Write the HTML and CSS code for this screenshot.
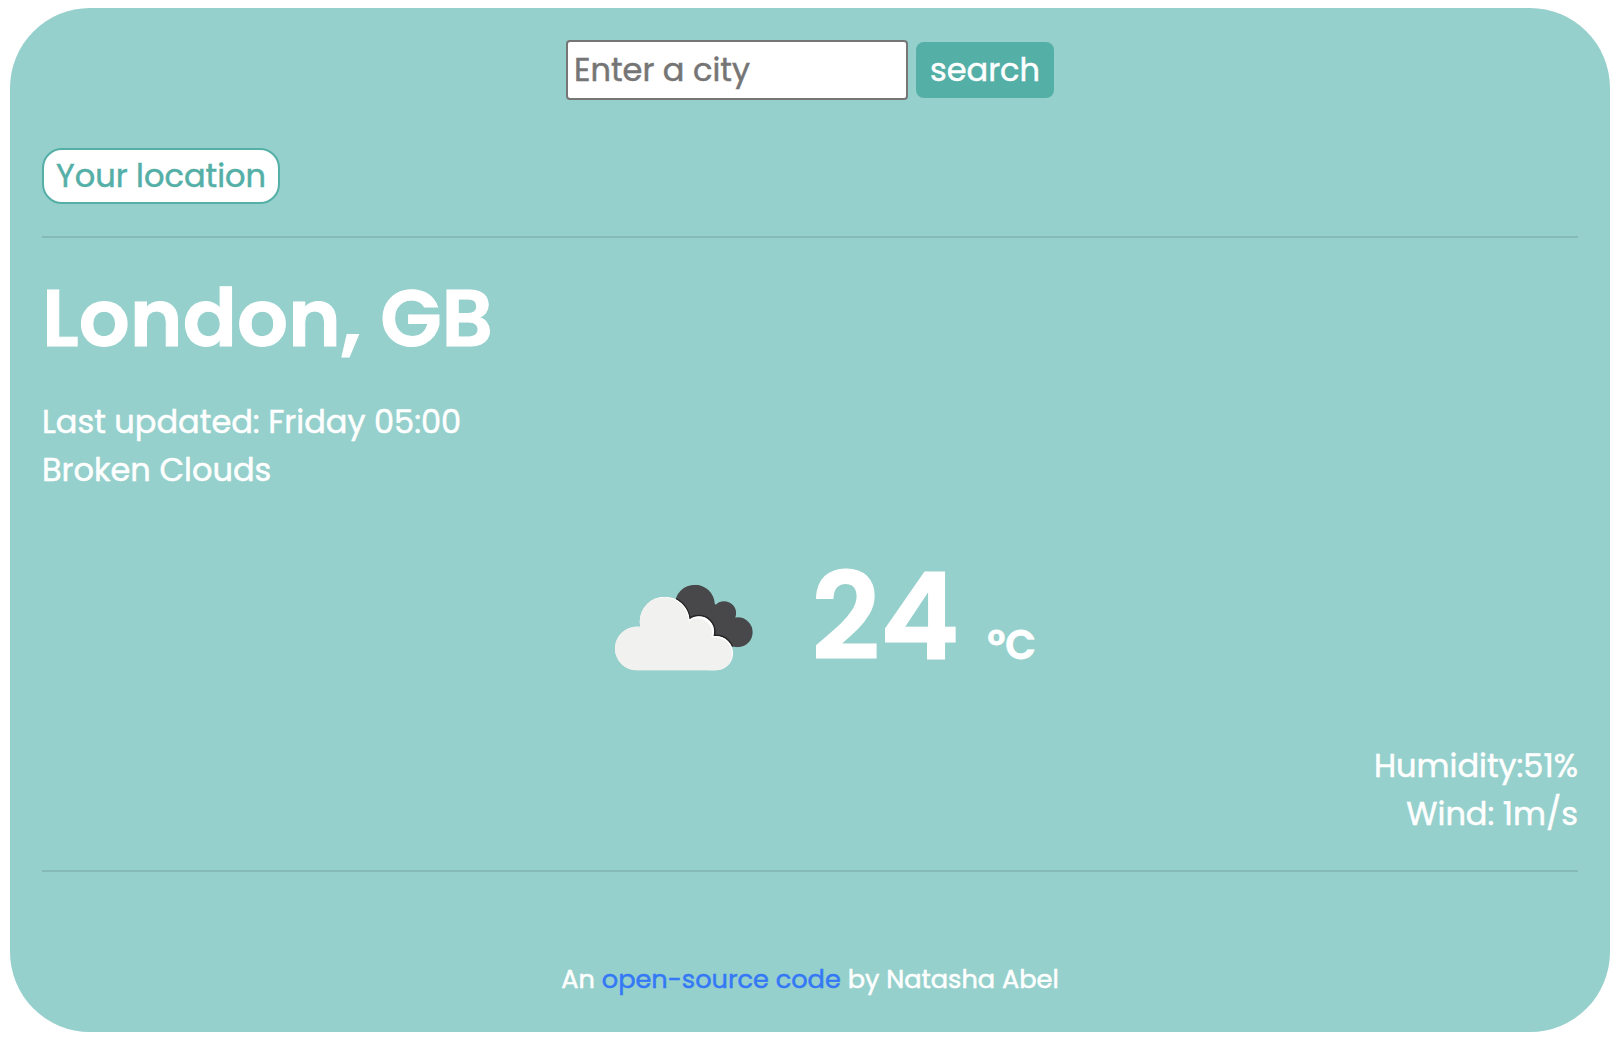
FILE: index.html
```html
<!DOCTYPE html>
<html lang="en">
<head>
<meta charset="utf-8">
<title>Weather</title>
<link rel="stylesheet" href="styles.css">
</head>
<body>
<main class="card">
  <form class="search">
    <input class="search-input" type="text" placeholder="Enter a city">
    <button class="search-button" type="button">search</button>
  </form>
  <button class="location" type="button">Your location</button>
  <hr class="rule">
  <h1 class="city">London, GB</h1>
  <ul class="details">
    <li class="updated">Last updated: Friday 05:00</li>
    <li class="sky">Broken Clouds</li>
  </ul>
  <section class="weather">
    <svg class="icon" viewBox="0 0 200 144" role="img" aria-label="Broken clouds">
      <defs>
        <clipPath id="dark">
          <circle cx="111.3" cy="62" r="20"/><circle cx="140.7" cy="70.7" r="12"/><circle cx="154.3" cy="89.7" r="15"/>
          <path d="M100 60L131 61L152 76L154 104L140 104L100 90Z"/>
        </clipPath>
        <clipPath id="light">
          <circle cx="53" cy="106" r="22"/><circle cx="81" cy="79" r="25"/><circle cx="115.3" cy="89" r="15.3"/><circle cx="132.3" cy="110.7" r="17.3"/>
          <path d="M53 90H125L133 110V128H53Z"/>
        </clipPath>
      </defs>
      <g transform="translate(0 .6)">
      <g clip-path="url(#dark)">
        <rect width="200" height="144" fill="#48484a"/>
        <g class="edge-dark"><circle cx="81" cy="79" r="26.3"/><circle cx="115.3" cy="89" r="16.8"/><circle cx="132.3" cy="110.7" r="18.8"/></g>
      </g>
      <g clip-path="url(#light)">
        <rect width="200" height="144" fill="#f1f1f0"/>
        <g class="edge-light"><circle cx="81" cy="79" r="25"/><circle cx="115.3" cy="89" r="15.3"/><circle cx="132.3" cy="110.7" r="17.3"/></g>
        <g class="cloud"><circle cx="53" cy="106" r="22"/><circle cx="80" cy="79.6" r="25"/><circle cx="114" cy="90.5" r="14.5"/><circle cx="131.3" cy="112" r="17.3"/><path d="M53 90H123L131 110V128H53Z"/></g>
      </g>
      </g>
    </svg>
    <strong class="temperature">24</strong>
    <strong class="unit">°C</strong>
  </section>
  <ul class="details conditions">
    <li class="humidity">Humidity:51%</li>
    <li class="wind">Wind: 1m/s</li>
  </ul>
  <hr class="rule">
  <footer class="footer">An <a class="link" href="#">open-source code</a> by Natasha Abel</footer>
</main>
</body>
</html>
```
FILE: styles.css
```css
body {
  margin: 8px 10px;
  background: #fff;
  color: #fff;
  font-family: Poppins, Inter, sans-serif;
  font-size: 32px;
  -webkit-text-stroke: 0.5px;
}
.card {
  box-sizing: border-box;
  height: 1024px;
  padding: 32px;
  border-radius: 80px;
  background: #96d0cc;
}
.search {
  display: flex;
  justify-content: center;
  align-items: center;
  gap: 8px;
  margin-bottom: 48px;
}
.search-input, .search-button, .location {
  box-sizing: border-box;
  font: inherit;
}
.search-input {
  width: 342px;
  height: 60px;
  padding: 0 6px;
  border: 2px solid #767676;
  border-radius: 4px;
  background: #fff;
}
.search-input::placeholder { color: #757575; }
.search-button {
  width: 138px;
  height: 56px;
  padding: 0;
  border: 0;
  border-radius: 8px;
  background: #54afa7;
  color: #fff;
}
.location {
  display: block;
  width: 238px;
  height: 56px;
  padding: 0;
  border: 2px solid #54afa7;
  border-radius: 20px;
  background: #fff;
  color: #54afa7;
}
.rule {
  height: 2px;
  margin: 32px 0 0;
  border: 0;
  background: #86bab7;
}
.city {
  margin: 33px 0;
  font-size: 80px;
  line-height: 94px;
  font-weight: 600;
  -webkit-text-stroke: 1px;
}
.details {
  margin: 0;
  padding: 0;
  list-style: none;
  line-height: 48px;
}
.weather {
  display: flex;
  width: 452px;
  height: 144px;
  margin: 48px auto 56px;
}
.icon { width: 200px; height: 144px; }
.edge-dark { fill: #242426; }
.edge-light { fill: #fff; }
.cloud { fill: #f1f1f0; }
.temperature {
  width: 177px;
  padding-left: 28px;
  font-size: 120px;
  line-height: 150px;
  font-weight: 600;
  -webkit-text-stroke: 1.2px;
}
.unit {
  font-size: 40px;
  line-height: 206px;
  font-weight: 600;
  -webkit-text-stroke: 0.8px;
}
.conditions { text-align: right; }
.footer {
  margin-top: 88px;
  font-size: 25.6px;
  line-height: 38px;
  text-align: center;
}
.link { color: #3478f6; text-decoration: none; }
```
